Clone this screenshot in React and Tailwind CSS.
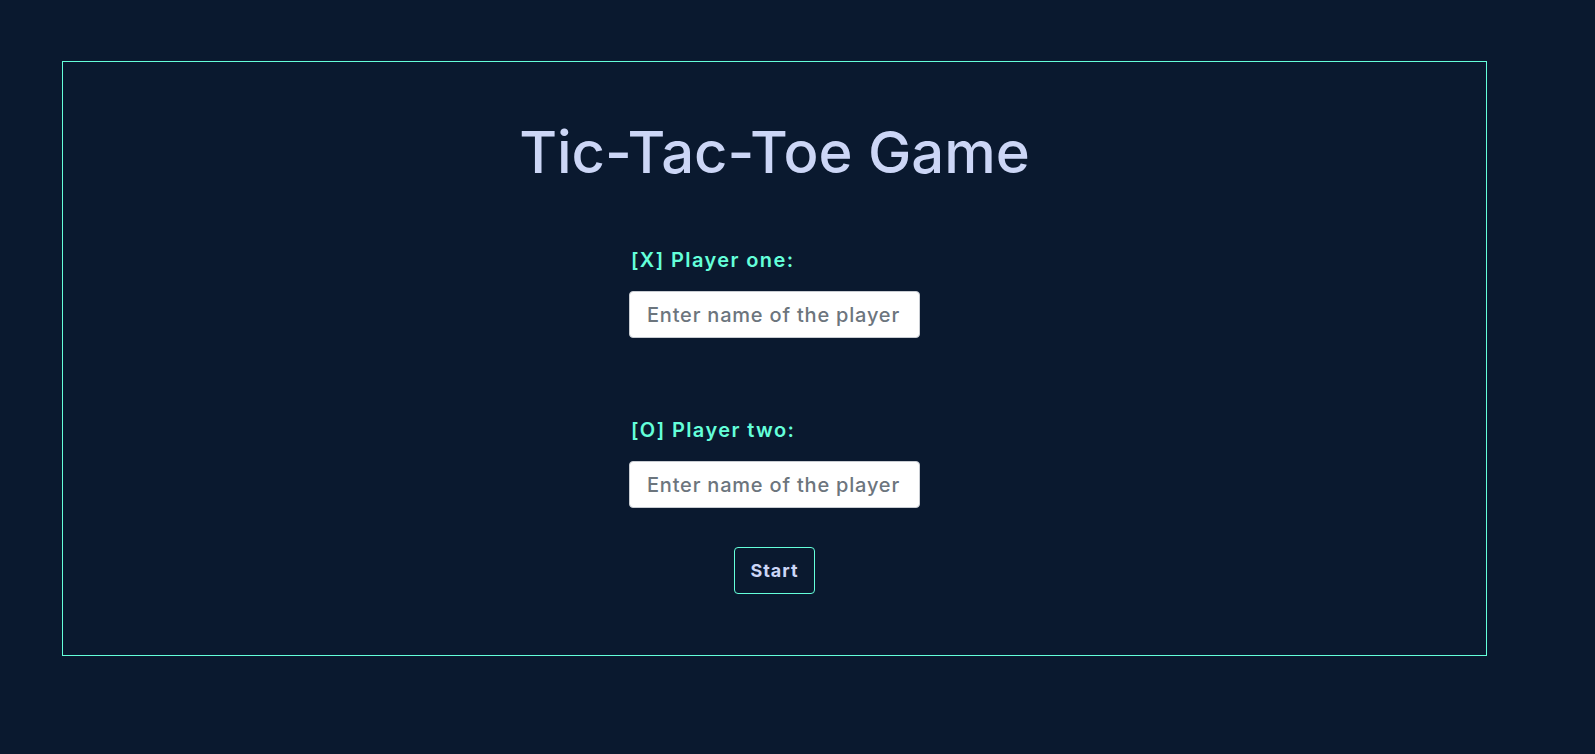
import React, { useState } from "react";

const PlayerField = ({ label, value, onChange, className = "" }) => {
  return (
    <div className={`flex flex-col ${className}`}>
      <label className="text-[20px] leading-[24px] font-semibold tracking-[1.4px] text-[#64ffda] pl-[2px]">
        {label}
      </label>
      <input
        type="text"
        value={value}
        onChange={onChange}
        placeholder="Enter name of the player"
        className="mt-[19px] h-[47px] w-[291px] rounded-[4px] border border-[#c8ccd2] bg-white px-[17px] text-[20px] tracking-[0.8px] font-medium text-[#374151] placeholder:text-[#6c757d] outline-none"
      />
    </div>
  );
};

const App = () => {
  const [players, setPlayers] = useState({ one: "", two: "" });

  const handleChange = (key) => (e) => {
    const { value } = e.target;
    setPlayers((prev) => ({ ...prev, [key]: value }));
  };

  return (
    <div
      className="min-h-screen bg-[#0a192f] pt-[61px] pl-[62px]"
      style={{ fontFamily: "Inter, 'Noto Sans', sans-serif" }}
    >
      <div className="flex h-[595px] w-[1425px] flex-col items-center border border-[#64ffda] pt-[61px]">
        <h1 className="text-[58px] leading-[58px] font-medium text-[#ccd6f6]">
          Tic-Tac-Toe Game
        </h1>

        <div className="mt-[67px] flex flex-col">
          <PlayerField
            label="[X] Player one:"
            value={players.one}
            onChange={handleChange("one")}
          />
          <PlayerField
            label="[O] Player two:"
            value={players.two}
            onChange={handleChange("two")}
            className="mt-[80px]"
          />
        </div>

        <button className="mt-[39px] h-[47px] w-[81px] rounded-[4px] border border-[#64ffda] text-[18px] font-bold tracking-[1px] text-[#ccd6f6]">
          Start
        </button>
      </div>
    </div>
  );
};

export default App;
